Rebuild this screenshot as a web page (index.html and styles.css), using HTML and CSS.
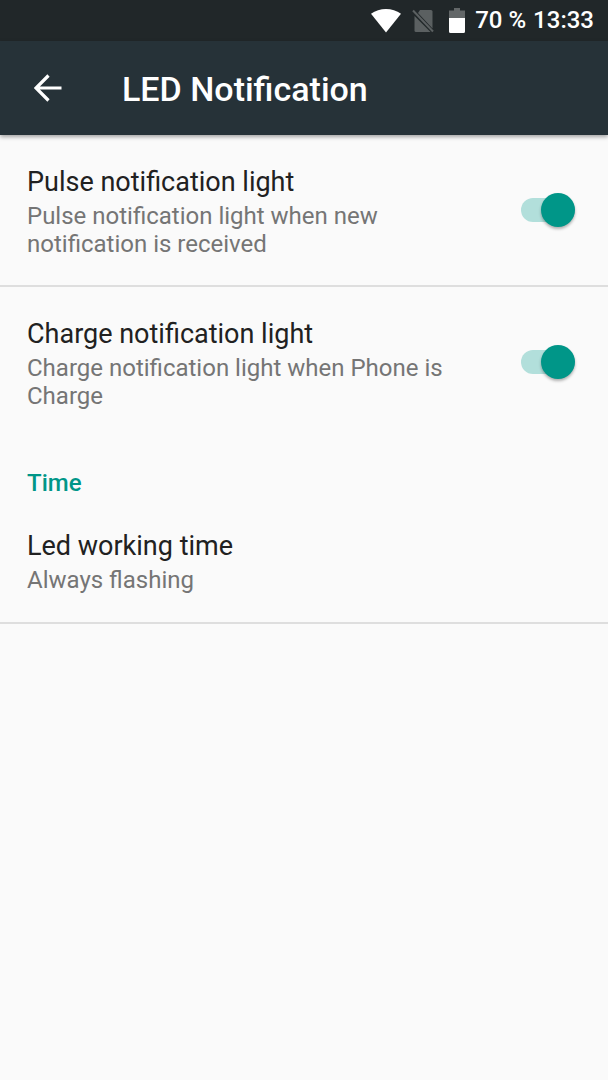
FILE: index.html
```html
<!DOCTYPE html>
<html lang="en">
<head>
<meta charset="utf-8">
<title>LED Notification</title>
<link rel="stylesheet" href="styles.css">
</head>
<body>
<div class="status-bar">
  <svg class="wifi" width="30" height="24" viewBox="0 0 30 24"><path d="M0 4.8C8.500-1.500 21.500-1.500 30 4.800L15 23.500z" fill="#fff"/></svg>
  <svg class="sim" width="22" height="24" viewBox="0 0 22 24"><path d="M8 1h11a1.500 1.500 0 0 1 1.500 1.500v17L6 4z" fill="#5b6061"/><path d="M2.500 7L18.500 23H4a1.500 1.500 0 0 1-1.500-1.500z" fill="#5b6061"/><path d="M1 1.500L21 22.500" stroke="#5b6061" stroke-width="2"/></svg>
  <svg class="battery" width="16" height="25" viewBox="0 0 16 25"><path d="M5 0h6v2.500h5V10H0V2.500h5z" fill="#636768"/><path d="M0 10h16v13.500a1.500 1.500 0 0 1-1.500 1.500h-13A1.500 1.500 0 0 1 0 23.500z" fill="#fff"/></svg>
  <span class="percent">70 %</span>
  <span class="clock">13:33</span>
</div>
<header class="app-bar">
  <svg class="back" width="28" height="28" viewBox="0 0 28 28"><path d="M27.500 14H3M14.500 1.500L2 14l12.500 12.500" fill="none" stroke="#fff" stroke-width="3.200"/></svg>
  <h1 class="title">LED Notification</h1>
</header>
<main class="settings">
  <section class="row">
    <div class="text"><div class="name">Pulse notification light</div><div class="summary">Pulse notification light when new<br>notification is received</div></div>
    <div class="switch"><span class="thumb"></span></div>
  </section>
  <section class="row charge">
    <div class="text"><div class="name">Charge notification light</div><div class="summary">Charge notification light when Phone is<br>Charge</div></div>
    <div class="switch"><span class="thumb"></span></div>
  </section>
  <h2 class="category">Time</h2>
  <section class="row working-time">
    <div class="text"><div class="name">Led working time</div><div class="summary">Always flashing</div></div>
  </section>
</main>
</body>
</html>
```
FILE: styles.css
```css
* { box-sizing: border-box; }
body { margin: 0; min-height: 1080px; background: #fafafa; font-family: Roboto, sans-serif; }
.status-bar { height: 41px; background: #212729; color: #fff; display: flex; align-items: center; padding-right: 14px; justify-content: flex-end; font-size: 24px; font-weight: 500; line-height: 41px; white-space: nowrap; }
.sim { margin-left: 11px; }
.battery { margin-left: 15px; }
.percent { margin-left: 10px; }
.clock { margin-left: 7px; }
.app-bar { height: 94px; background: #263238; display: flex; align-items: center; padding-left: 34px; box-shadow: 0 2px 4px rgba(0,0,0,.35); color: #fff; }
.title { margin: 2px 0 0 60px; font-size: 34px; font-weight: 500; line-height: 40px; white-space: nowrap; }
.row { height: 152px; padding: 29px 33px 0 27px; display: flex; justify-content: space-between; border-bottom: 2px solid #dedede; }
.name { font-size: 27px; line-height: 36px; color: #212121; white-space: nowrap; }
.summary { font-size: 24px; line-height: 28px; margin-top: 2px; color: #757575; white-space: nowrap; }
.switch { width: 54px; height: 24px; margin-top: 34px; border-radius: 12px; background: #b2dfdb; display: flex; justify-content: flex-end; align-items: center; }
.thumb { width: 34px; height: 34px; border-radius: 50%; background: #009688; box-shadow: 0 2px 3px rgba(0,0,0,.3); }
.charge { height: 151px; border: 0; }
.category { margin: 29px 0 0 27px; color: #009688; font-size: 24px; line-height: 32px; font-weight: 500; }
.working-time { height: 125px; }
```
